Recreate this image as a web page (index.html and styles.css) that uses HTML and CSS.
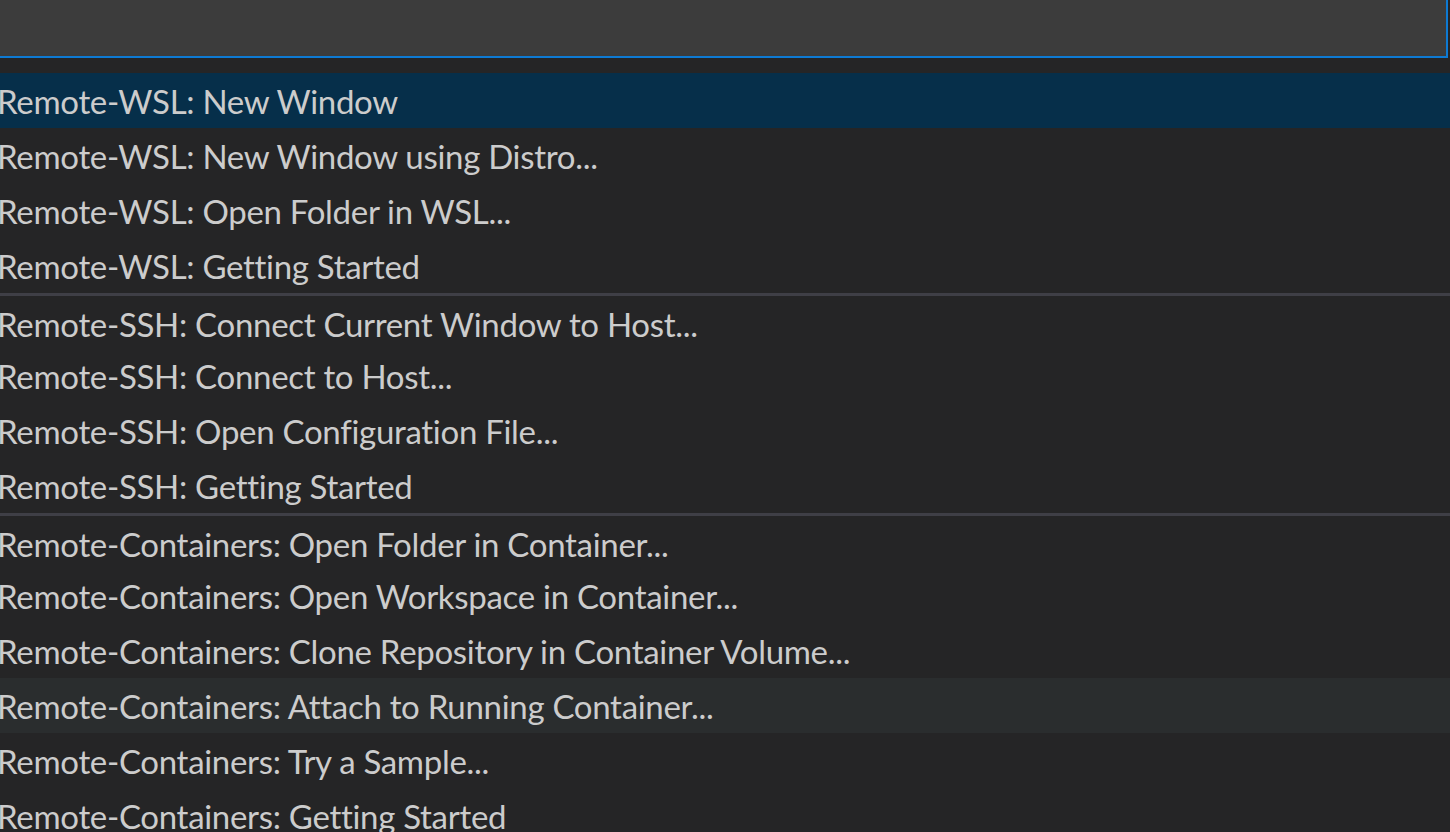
FILE: index.html
```html
<!DOCTYPE html>
<html lang="en">
<head>
<meta charset="utf-8">
<title>Quick Pick</title>
<link rel="stylesheet" href="styles.css">
</head>
<body>
<div class="quick-input">
  <div class="input-row">
    <div class="input-box"></div>
  </div>
  <ul class="list">
    <li class="item selected"><span class="label">Remote-WSL: New Window</span></li>
    <li class="item"><span class="label">Remote-WSL: New Window using Distro...</span></li>
    <li class="item"><span class="label">Remote-WSL: Open Folder in WSL...</span></li>
    <li class="item"><span class="label">Remote-WSL: Getting Started</span></li>
    <li class="item sep"><span class="label">Remote-SSH: Connect Current Window to Host...</span></li>
    <li class="item"><span class="label">Remote-SSH: Connect to Host...</span></li>
    <li class="item"><span class="label">Remote-SSH: Open Configuration File...</span></li>
    <li class="item"><span class="label">Remote-SSH: Getting Started</span></li>
    <li class="item sep"><span class="label">Remote-Containers: Open Folder in Container...</span></li>
    <li class="item"><span class="label">Remote-Containers: Open Workspace in Container...</span></li>
    <li class="item"><span class="label">Remote-Containers: Clone Repository in Container Volume...</span></li>
    <li class="item hover"><span class="label">Remote-Containers: Attach to Running Container...</span></li>
    <li class="item"><span class="label">Remote-Containers: Try a Sample...</span></li>
    <li class="item"><span class="label">Remote-Containers: Getting Started</span></li>
  </ul>
</div>
</body>
</html>
```
FILE: styles.css
```css
html, body {
  margin: 0;
  padding: 0;
  background: #252526;
  overflow: hidden;
  height: 100%;
}
.quick-input {
  width: 1450px;
  font-family: "Lato", "Open Sans", sans-serif;
  color: #cccccc;
  font-variant-ligatures: none;
  font-feature-settings: "liga" 0, "clig" 0;
}
.input-row {
  padding-right: 2px;
  padding-bottom: 15px;
}
.input-box {
  height: 56px;
  background: #3c3c3c;
  border-bottom: 2px solid #0e7ad3;
  border-right: 2px solid #0e7ad3;
}
.list {
  list-style: none;
  margin: 0;
  padding: 0;
}
.item {
  box-sizing: border-box;
  height: 55px;
  display: flex;
  align-items: center;
  font-size: 33px;
  letter-spacing: -0.3px;
  white-space: nowrap;
  padding-top: 0;
}
.item.sep {
  border-top: 3px solid #3f3f46;
  padding-top: 3px;
}
.label {
  margin-left: -3px;
}
.item.selected {
  background: #062f4a;
}
.item.hover {
  background: #2a2d2e;
}
```
